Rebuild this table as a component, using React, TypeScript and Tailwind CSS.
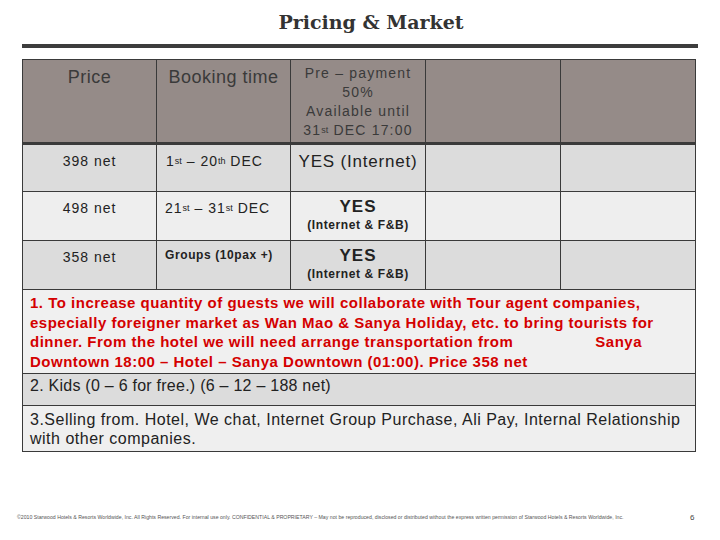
import React from "react";

const cell = "border border-[#3a3a3a] align-top";

function Sup({ children }: { children: React.ReactNode }) {
  return <sup className="text-[9px] relative -top-[2px] tracking-normal">{children}</sup>;
}

function Yes() {
  return (
    <>
      <div className="text-[17px] font-bold leading-[20px] tracking-[1px]">YES</div>
      <div className="text-[12px] font-bold leading-[16px] tracking-[0.6px]">(Internet &amp; F&amp;B)</div>
    </>
  );
}

export default function App() {
  return (
    <div
      className="w-[720px] h-[540px] bg-white relative overflow-hidden text-[#222]"
      style={{ fontFamily: '"Liberation Sans", Arial, sans-serif' }}
    >
      <h1
        className="text-center text-[19px] font-bold text-[#333] pt-[10px] pl-[22px] leading-[24px]"
        style={{ fontFamily: '"DejaVu Serif", Georgia, serif' }}
      >
        Pricing &amp; Market
      </h1>
      <div className="mx-[22px] mt-[10px] h-[4px] bg-[#3d3d3d]" />

      <table className="ml-[22px] mt-[11px] w-[673px] border-collapse table-fixed">
        <colgroup>
          <col className="w-[134px]" />
          <col className="w-[134px]" />
          <col className="w-[135px]" />
          <col className="w-[135px]" />
          <col className="w-[135px]" />
        </colgroup>
        <tbody>
          <tr className="h-[84px] bg-[#958b88] text-[#3a3a3a]">
            <td className={`${cell} border-b-[3px] text-center text-[18px] tracking-[0.5px] pt-[4px]`}>Price</td>
            <td className={`${cell} border-b-[3px] text-center text-[18px] tracking-[0.5px] pt-[4px]`}>
              Booking time
            </td>
            <td className={`${cell} border-b-[3px] text-center text-[14px] tracking-[1.2px] leading-[19px] pt-[4px]`}>
              Pre – payment
              <br />
              50%
              <br />
              Available until
              <br />
              31<Sup>st</Sup> DEC 17:00
            </td>
            <td className={`${cell} border-b-[3px]`} />
            <td className={`${cell} border-b-[3px]`} />
          </tr>
          <tr className="h-[48px] bg-[#dcdcdc]">
            <td className={`${cell} text-center text-[14px] tracking-[1px] pt-[6px]`}>398 net</td>
            <td className={`${cell} text-[14px] tracking-[1px] pt-[6px] pl-[9px]`}>
              1<Sup>st</Sup> – 20<Sup>th</Sup> DEC
            </td>
            <td className={`${cell} text-center text-[17px] tracking-[0.8px] pt-[4px]`}>YES (Internet)</td>
            <td className={cell} />
            <td className={cell} />
          </tr>
          <tr className="h-[49px] bg-[#eeeeee]">
            <td className={`${cell} text-center text-[14px] tracking-[1px] pt-[6px]`}>498 net</td>
            <td className={`${cell} text-[14px] tracking-[1px] pt-[6px] pl-[8px]`}>
              21<Sup>st</Sup> – 31<Sup>st</Sup> DEC
            </td>
            <td className={`${cell} text-center pt-[5px]`}>
              <Yes />
            </td>
            <td className={cell} />
            <td className={cell} />
          </tr>
          <tr className="h-[49px] bg-[#dcdcdc]">
            <td className={`${cell} text-center text-[14px] tracking-[1px] pt-[6px]`}>358 net</td>
            <td className={`${cell} text-[12px] font-bold tracking-[0.6px] pt-[5px] pl-[8px]`}>
              Groups (10pax +)
            </td>
            <td className={`${cell} text-center pt-[5px]`}>
              <Yes />
            </td>
            <td className={cell} />
            <td className={cell} />
          </tr>
          <tr className="h-[84px] bg-[#f0f0f0]">
            <td
              colSpan={5}
              className={`${cell} text-[#d40000] font-bold text-[15px] tracking-[0.5px] leading-[19.5px] pt-[3px] pl-[7px] pr-[8px] whitespace-nowrap`}
            >
              <div>1. To increase quantity of guests we will collaborate with Tour agent companies,</div>
              <div>especially foreigner market as Wan Mao &amp; Sanya Holiday, etc. to bring tourists for</div>
              <div className="flex">
                <span>dinner. From the hotel we will need arrange transportation from</span>
                <span className="ml-auto mr-[45px]">Sanya</span>
              </div>
              <div>Downtown 18:00 – Hotel – Sanya Downtown (01:00). Price 358 net</div>
            </td>
          </tr>
          <tr className="h-[32px] bg-[#dcdcdc]">
            <td colSpan={5} className={`${cell} align-middle text-[16px] tracking-[0.25px] pl-[7px]`}>
              2. Kids (0 – 6 for free.) (6 – 12 – 188 net)
            </td>
          </tr>
          <tr className="h-[46px] bg-[#efefef]">
            <td
              colSpan={5}
              className={`${cell} text-[16px] tracking-[0.5px] leading-[19px] pt-[4px] pl-[7px] pr-[6px] whitespace-nowrap`}
            >
              <div>3.Selling from. Hotel, We chat, Internet Group Purchase, Ali Pay, Internal Relationship</div>
              <div>with other companies.</div>
            </td>
          </tr>
        </tbody>
      </table>

      <div className="absolute left-[17px] top-[514px] text-[5.2px] text-[#555] whitespace-nowrap">
        ©2010 Starwood Hotels &amp; Resorts Worldwide, Inc. All Rights Reserved. For internal use only.
        CONFIDENTIAL &amp; PROPRIETARY – May not be reproduced, disclosed or distributed without the express
        written permission of Starwood Hotels &amp; Resorts Worldwide, Inc.
      </div>
      <div className="absolute left-[690px] top-[512px] text-[8px] text-[#444]">6</div>
    </div>
  );
}
